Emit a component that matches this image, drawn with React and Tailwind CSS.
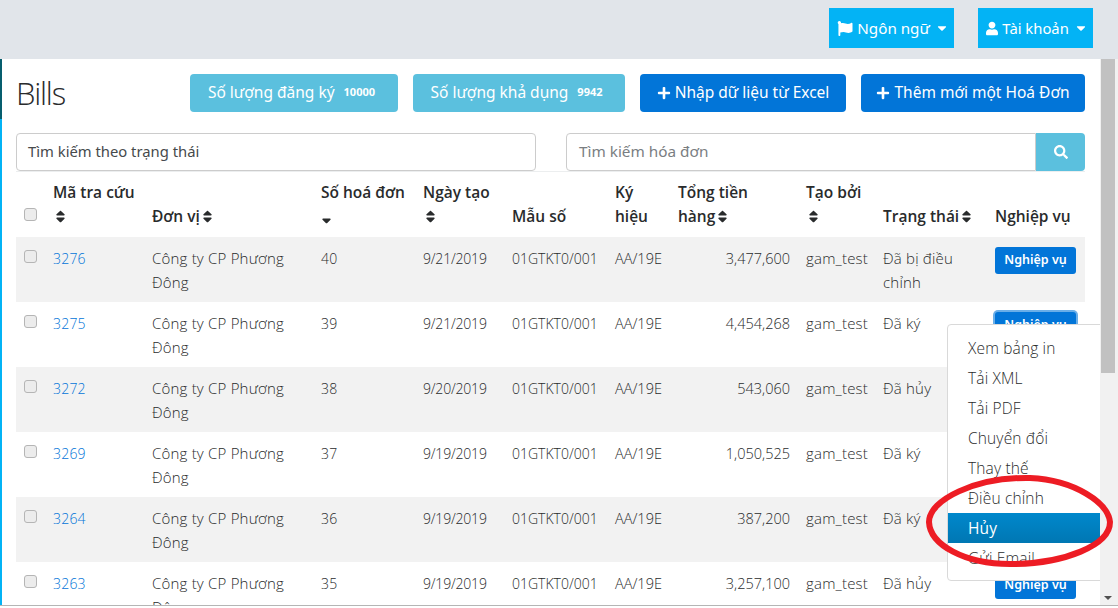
import React from "react";
import { FaFlag, FaUser, FaPlus, FaSearch, FaSort, FaSortDown, FaCaretDown } from "react-icons/fa";

const rows = [
  ["3276", "40", "9/21/2019", "3,477,600", "Đã bị điều chỉnh"],
  ["3275", "39", "9/21/2019", "4,454,268", "Đã ký"],
  ["3272", "38", "9/20/2019", "543,060", "Đã hủy"],
  ["3269", "37", "9/19/2019", "1,050,525", "Đã ký"],
  ["3264", "36", "9/19/2019", "387,200", "Đã ký"],
  ["3263", "35", "9/19/2019", "3,257,100", "Đã hủy"],
];
const menu = ["Xem bảng in", "Tải XML", "Tải PDF", "Chuyển đổi", "Thay thế", "Điều chỉnh", "Hủy", "Gửi Email"];
const widths = [29, 99, 169, 102, 89, 103, 63, 128, 77, 112, 98];

function Sort() {
  return <FaSort className="inline-block w-[11px] h-[15px] ml-[2px] align-[-2px] text-[#292b2c]" />;
}
function Box() {
  return (
    <input
      type="checkbox"
      readOnly
      className="block appearance-none w-[13px] h-[13px] rounded-[3px] border border-[#b5b5b5] bg-[#ececec]"
    />
  );
}
function Th({ children, className = "" }) {
  return <th className={"px-2 pb-[9px] align-bottom text-left font-semibold text-[15.5px] leading-[24px] text-[#292b2c] " + className}>{children}</th>;
}
const cell = "px-2 pt-[10px] align-top leading-[24px] ";
const textCell = "px-2 pt-[9px] align-top leading-[24px] ";

export default function App() {
  return (
    <div className="relative flex flex-col w-[1118px] h-[608px] overflow-hidden bg-white font-['Open_Sans',sans-serif]">
      <header className="flex h-[59px] shrink-0 items-start justify-end gap-[24px] bg-[#e1e5ea] pt-2 pr-[25px] font-['Noto_Sans',sans-serif] text-[15.2px] text-white">
        <button className="flex h-[40px] w-[125px] items-center justify-center gap-[4px] bg-[#03b3f5] pl-[3px]">
          <FaFlag className="w-[16px] h-[15px]" />
          <span>Ngôn ngữ</span>
          <FaCaretDown className="ml-[1px] w-[14px] h-[14px]" />
        </button>
        <button className="flex h-[40px] w-[115px] items-center justify-center gap-[4px] bg-[#03b3f5] pl-[3px] text-[14.8px]">
          <FaUser className="w-[12px] h-[15px]" />
          <span>Tài khoản</span>
          <FaCaretDown className="ml-[1px] w-[14px] h-[14px]" />
        </button>
      </header>

      <div className="flex h-[546px] shrink-0">
        <div className="flex w-[2px] shrink-0 flex-col bg-[#03b3f5]">
          <div className="h-[60px] bg-[#075e6e]" />
        </div>

        <main className="relative w-[1098px] shrink-0 overflow-hidden pl-[14px] pr-[15px] pt-[15px]">
          <div className="flex h-[38px] items-center">
            <h1 className="font-light text-[31px] leading-[38px] tracking-[-1.2px] text-[#292b2c]">Bills</h1>
            <div className="ml-auto flex gap-[15px] font-['Noto_Sans',sans-serif] text-[15.5px] text-white">
              <button className="flex h-[38px] w-[208px] items-center justify-center gap-[9px] rounded-[4px] bg-[#5bc0de] pb-[1px] pr-[5px]">
                <span>Số lượng đăng ký</span>
                <span className="text-[11px] font-bold">10000</span>
              </button>
              <button className="flex h-[38px] w-[212px] items-center justify-center gap-[9px] rounded-[4px] bg-[#5bc0de] pb-[1px] pr-[5px]">
                <span>Số lượng khả dụng</span>
                <span className="text-[11px] font-bold">9942</span>
              </button>
              <button className="flex h-[38px] w-[206px] items-center justify-center gap-[4px] rounded-[4px] bg-[#0275d8] pb-[1px]">
                <FaPlus className="w-[14px] h-[14px]" />
                <span>Nhập dữ liệu từ Excel</span>
              </button>
              <button className="flex h-[38px] w-[224px] items-center justify-center gap-[4px] rounded-[4px] bg-[#0275d8] pb-[1px]">
                <FaPlus className="w-[14px] h-[14px]" />
                <span>Thêm mới một Hoá Đơn</span>
              </button>
            </div>
          </div>

          <div className="mt-[21px] flex h-[38px] gap-[30px] font-['Noto_Sans',sans-serif] text-[14.8px]">
            <div className="flex w-[520px] items-center rounded-[4px] border border-[#cccccc] px-[11px] pb-[2px] text-[#464a4c]">
              Tìm kiếm theo trạng thái
            </div>
            <div className="flex flex-1">
              <div className="flex flex-1 items-center rounded-l-[4px] border border-[#cccccc] px-[12px] pb-[2px] text-[15.3px] text-[#7a7e82]">
                Tìm kiếm hóa đơn
              </div>
              <button className="flex w-[49px] items-center justify-center rounded-r-[4px] bg-[#5bc0de] text-white">
                <FaSearch className="w-[14px] h-[14px]" />
              </button>
            </div>
          </div>

          <table className="w-[1069px] table-fixed border-collapse border-t border-[#eceeef] text-[15px] tracking-[0.2px]">
            <colgroup>
              {widths.map((w, i) => (
                <col key={i} style={{ width: w }} />
              ))}
            </colgroup>
            <thead>
              <tr className="h-[65px] tracking-normal">
                <th className="px-2 pb-[16px] align-bottom"><Box /></th>
                <Th>Mã tra cứu <Sort /></Th>
                <Th>Đơn vị<Sort /></Th>
                <Th>Số hoá đơn <FaSortDown className="inline-block w-[11px] h-[15px] text-[#292b2c]" /></Th>
                <Th>Ngày tạo <Sort /></Th>
                <Th>Mẫu số</Th>
                <Th>Ký hiệu</Th>
                <Th>Tổng tiền<br />hàng<Sort /></Th>
                <Th>Tạo bởi <Sort /></Th>
                <Th>Trạng thái<Sort /></Th>
                <Th>Nghiệp vụ</Th>
              </tr>
            </thead>
            <tbody className="font-light text-[#292b2c]">
              {rows.map((r, i) => (
                <tr key={r[0]} className={"h-[65px] " + (i % 2 === 0 ? "bg-[#f2f2f2]" : "bg-white")}>
                  <td className="px-2 pt-[13px] align-top"><Box /></td>
                  <td className={cell + "text-[14px] text-[#0275d8]"}>{r[0]}</td>
                  <td className={textCell}>Công ty CP Phương Đông</td>
                  <td className={cell + "text-[14px]"}>{r[1]}</td>
                  <td className={cell + "text-[14px] tracking-[-0.2px]"}>{r[2]}</td>
                  <td className={cell + "text-[14px] tracking-normal"}>01GTKT0/001</td>
                  <td className={cell + "text-[14.5px] tracking-normal"}>AA/19E</td>
                  <td className={cell + "text-right text-[14.5px] tracking-normal"}>{r[3]}</td>
                  <td className={textCell}>gam_test</td>
                  <td className={textCell}>{r[4]}</td>
                  <td className="px-2 pt-[10px] align-top tracking-normal">
                    <button
                      className={
                        "flex h-[27px] w-[81px] items-center justify-center rounded-[3px] bg-[#0275d8] font-['Noto_Sans',sans-serif] text-[12.5px] font-semibold text-white " +
                        (i === 1 ? "ring-2 ring-[#6aaee8]" : "")
                      }
                    >
                      Nghiệp vụ
                    </button>
                  </td>
                </tr>
              ))}
            </tbody>
          </table>

          <div className="absolute left-[945px] top-[265px] h-[257px] w-[170px] rounded-[4px] border border-[#d9d9d9] bg-white py-2 text-[15.5px] tracking-[0.15px] font-light text-[#292b2c]">
            {menu.map((m) => (
              <div
                key={m}
                className={
                  "flex h-[30px] items-center px-5 pt-[2px] " +
                  (m === "Hủy" ? "bg-gradient-to-b from-[#0088cc] to-[#0077b3] font-normal text-white" : "")
                }
              >
                {m}
              </div>
            ))}
          </div>
        </main>

        <div className="flex w-[18px] shrink-0 flex-col items-center bg-[#f1f1f1] pr-[2px]">
          <div className="h-[314px] w-[14px] bg-[#c1c1c1]" />
          <div className="mt-auto mb-[5px] h-0 w-0 border-x-[4px] border-t-[4px] border-x-transparent border-t-[#505050]" />
        </div>
      </div>

      <div className="h-[3px] shrink-0 border-t border-[#b5b5b5] bg-white" />

      <svg className="pointer-events-none absolute inset-0" width="1118" height="608" viewBox="0 0 1118 608" fill="none">
        <path
          d="M1030 478 C 1075 480 1108 503 1110 522 C 1110 545 1065 564 1010 564 C 965 564 930 545 929 522 C 929 500 975 477 1030 478 Z"
          stroke="#ed1c24"
          strokeWidth="6"
        />
      </svg>
    </div>
  );
}
